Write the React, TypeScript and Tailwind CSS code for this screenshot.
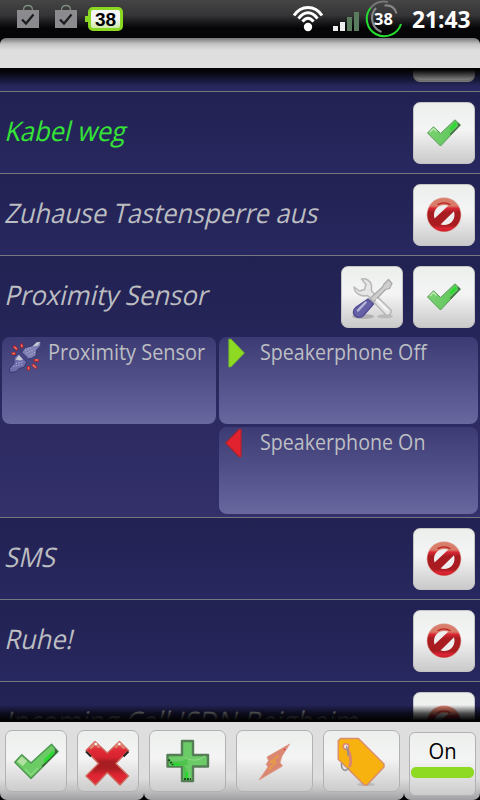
import type { ReactNode } from 'react';

const keyFace =
  'shrink-0 rounded-[7px] border border-[#c4c4c4] bg-linear-to-b from-[#ecefec] via-[#f4f4f5] via-45% to-[#cacaca]';
const barKey =
  'h-[62px] shrink-0 rounded-[7px] border border-[#b2b2b5] bg-linear-to-b from-[#ecefec] via-[#f4f4f5] via-45% to-[#cccccc]';

function CheckIcon() {
  return (
    <svg viewBox="0 0 62 62" className="-m-px block size-[62px]">
      <defs>
        <linearGradient id="chk" x1="0" y1="0" x2="1" y2="0.3">
          <stop offset="0" stopColor="#7fd375" />
          <stop offset="0.6" stopColor="#6bcb65" />
          <stop offset="1" stopColor="#55c352" />
        </linearGradient>
      </defs>
      <path d="M14.5 31 20.5 24.8 27.6 31.5 42 17.8 47.5 23 27.5 44Z" fill="url(#chk)" stroke="#5a9a5a" strokeWidth="1" strokeLinejoin="round" />
      <path d="M44.5 20.5 47.5 23 38 33 36.8 32 45 24Z" fill="#4a6b4c" />
      <path d="M37 26 42.5 20.5 43.5 23 38 28.5Z" fill="#22e02a" />
      <path d="M17 30 20.5 26.5 23.5 29.500" fill="none" stroke="#c3e9b4" strokeWidth="1.4" />
    </svg>
  );
}

function BigCheckIcon() {
  return (
    <svg viewBox="0 0 62 62" className="-m-px block size-[62px]">
      <path d="M9.8 32.3 16.8 24.8 26 33 46.5 14.3 53 21.5 26 48.5Z" fill="#6bcb65" stroke="#4d9650" strokeWidth="1.4" strokeLinejoin="round" />
      <path d="M49.5 18.5 53 21.5 38 37 36.5 36 50 22Z" fill="#40633f" />
      <path d="M39 29.5 48 20.5 49.5 23.5 39.5 33.5Z" fill="#27dc2e" />
      <path d="M12 31.5 16.8 26.5 22 31 18 36Z" fill="#b4dfa2" />
      <path d="M20 39 26 45 33 38" fill="none" stroke="#8fdb84" strokeWidth="1.2" />
    </svg>
  );
}

function BlockedIcon() {
  return (
    <svg viewBox="0 0 62 62" className="-m-px block size-[62px]">
      <defs>
        <linearGradient id="ban" x1="0" y1="13" x2="0" y2="49" gradientUnits="userSpaceOnUse">
          <stop offset="0" stopColor="#d9806c" />
          <stop offset="0.25" stopColor="#d87a68" />
          <stop offset="0.31" stopColor="#dc2735" />
          <stop offset="0.42" stopColor="#a91d22" />
          <stop offset="0.78" stopColor="#a81c20" />
          <stop offset="0.88" stopColor="#e02536" />
          <stop offset="1" stopColor="#b52020" />
        </linearGradient>
      </defs>
      <circle cx="31" cy="30.8" r="17.3" fill="#d99a8c" />
      <circle cx="31" cy="30.8" r="16.600" fill="url(#ban)" />
      <path d="M21.500 34.500C19 25.500 26 18.800 35.500 21.500ZM27.500 40.500 41 27.200C43.500 36 36.500 42.700 27.500 40.500Z" fill="#eeeeef" />
      <path d="M24.500 20.800Q31 16.800 37.500 20.800" fill="none" stroke="#b92222" strokeWidth="1.200" />
    </svg>
  );
}

function ToolsIcon() {
  return (
    <svg viewBox="0 0 62 62" className="-m-px block size-[62px]">
      <ellipse cx="22" cy="50.500" rx="11" ry="2.500" fill="#b0b0b0" />
      <ellipse cx="44" cy="50.300" rx="8" ry="2" fill="#b9b9b9" />
      <path d="M20.500 13C25 12 29.500 14.500 30.500 19.500L30.500 25 49.500 43.500C51.500 46.500 48.500 50.500 45 49L26.500 29.500C20 31 13.500 27.500 13 21L18.500 25 23.500 23.500 25 18.500Z" fill="#e6e6e6" stroke="#b8b8b8" strokeWidth="1.500" strokeLinejoin="round" />
      <path d="M43 18 47.500 13.500 51 17.500 48.500 22.500 44.500 23.500 32.500 36 29 32.500 41.500 21Z" fill="#cecece" stroke="#a8a8a8" strokeWidth="1.200" strokeLinejoin="round" />
      <path d="M27 33 32.500 38 22 50C18 53 12 50.500 12.500 45.500 12.500 43 14 42.500 16 40.500Z" fill="#6661a6" stroke="#504c91" strokeWidth="1.400" strokeLinejoin="round" />
      <path d="M17 44.500 24.500 36.500" stroke="#b9b6da" strokeWidth="2.400" strokeLinecap="round" />
      <path d="M35 33 46.500 44.500" stroke="#fafafa" strokeWidth="1.600" />
    </svg>
  );
}

function CrossIcon() {
  return (
    <svg viewBox="0 0 62 62" className="-m-px block size-[62px]">
      <defs>
        <linearGradient id="cross" x1="0" y1="11" x2="0" y2="56" gradientUnits="userSpaceOnUse">
          <stop offset="0" stopColor="#df6a5c" />
          <stop offset="0.2" stopColor="#e02a36" />
          <stop offset="0.36" stopColor="#d82430" />
          <stop offset="0.46" stopColor="#a71d22" />
          <stop offset="0.62" stopColor="#ab1e22" />
          <stop offset="0.76" stopColor="#de2432" />
          <stop offset="1" stopColor="#e0303a" />
        </linearGradient>
      </defs>
      <path d="M18 11.500 30.300 23 42.500 11.500 51.500 20.500 38.800 33.500 51.500 46 43 55 30.300 42.500 18.500 55 9 46 21.500 33.500 9 20.500Z" fill="url(#cross)" stroke="#cf695d" strokeWidth="1.400" strokeLinejoin="round" />
      <path d="M13 18.500 18.300 13.500 22.500 17.500M38 17.500 42.500 13.500 47.500 18.500" fill="none" stroke="#df8370" strokeWidth="2.600" />
      <path d="M9 21.500 14 26.500M51.500 21.500 46.500 26.500" stroke="#262020" strokeWidth="1.800" />
      <circle cx="18.800" cy="14" r="1.300" fill="#fff" />
      <circle cx="42.300" cy="14" r="1.300" fill="#fff" />
    </svg>
  );
}

function PlusIcon() {
  return (
    <svg viewBox="0 0 77 62" className="-m-px block h-[62px] w-[77px]">
      <path d="M33 11H44V25H59V36.500H44V51H33V36.500H18.500V25H33Z" fill="#6acb67" stroke="#557d56" strokeWidth="2.400" strokeLinejoin="round" />
      <path d="M20 31.500H28Q35 32 38.500 27V35H35L37.500 39V49H34.500V36H20Z" fill="#4fc44d" />
      <path d="M24 34.500H31M38 42V49.500" stroke="#22dc2c" strokeWidth="2" />
      <path d="M19.500 29.500 24 35M35 49H42" stroke="#174a19" strokeWidth="2" strokeDasharray="2 1" />
      <path d="M36 28Q47 33 56 26" fill="none" stroke="#8ad680" strokeWidth="1.200" />
    </svg>
  );
}

function BoltIcon() {
  return (
    <svg viewBox="0 0 77 62" className="-m-px block h-[62px] w-[77px]">
      <path d="M53.700 14 31 27 32.500 30.500 30.300 34.500 32 37 23 50 46.500 36 44 32.500 46 26Z" fill="#da8671" stroke="#dc9a88" strokeWidth="0.900" strokeLinejoin="round" />
      <path d="M42 26 36 31.500 40 32 32.500 40" fill="none" stroke="#eda23a" strokeWidth="2.500" strokeDasharray="1.500 1" />
      <circle cx="48.500" cy="19.500" r="0.800" fill="#e22838" />
    </svg>
  );
}

function TagIcon() {
  return (
    <svg viewBox="0 0 77 62" className="-m-px block h-[62px] w-[77px]">
      <ellipse cx="43" cy="54.500" rx="9" ry="1.600" fill="#b9b9b9" />
      <path d="M15.200 10.700 17.500 8.500H35.500L61 34V37L44 55H41.300L15.200 29.200Z" fill="#f7b20f" stroke="#d98d70" strokeWidth="1.400" strokeLinejoin="round" />
      <circle cx="23" cy="16.500" r="2.800" fill="#f1eee8" stroke="#d98770" strokeWidth="1.600" />
      <path d="M24.500 19C27.500 25 28.500 32 26.500 37" fill="none" stroke="#d98770" strokeWidth="3" />
      <path d="M23.300 16Q25.500 20 25 26M18.500 33Q18 40 22.500 40.500L26 38" fill="none" stroke="#8d8f98" strokeWidth="1.500" />
    </svg>
  );
}

function PlugIcon() {
  return (
    <svg viewBox="0 0 36 37" className="block h-[37px] w-9 shrink-0">
      <path d="M1.500 31.500 2 35.500 8 34.700 11.300 31.500 16 30.300 18.700 25 10.300 16.800 6 20.700V26.300Z" fill="#6f6dab" stroke="#3a3870" strokeWidth="1" strokeLinejoin="round" />
      <path d="M13.700 15.300 17 10.700 24.300 8.700 28.500 4.700 33 4 32.700 8.700 28.700 13 28 18.700 23.700 21.300 20.500 22Z" fill="#807fb5" stroke="#3a3870" strokeWidth="1" strokeLinejoin="round" />
      <path d="M11 15.500 20.500 24.500" stroke="#4a4788" strokeWidth="1.800" />
      <path d="M7.500 22.500 11 18 15 22.500 12 23.500ZM24.500 9.500 29 5.300 32 5 30 8.500Z" fill="#c9cad2" />
      <path d="M17 13.500 23 11M18.500 16 26.500 12.500M21 18.500 27 15.500M8 26.500 15 25M5 29.500 14 27.500" stroke="#a9aaca" strokeWidth="1.200" strokeDasharray="1.200 1.500" />
      <path d="M13.500 6.500 14 11M5.500 9 9.500 13M3.500 16.700H7.800M25.700 23.300H31M24.200 27.300 28.500 31.300M20.500 29V33.500" stroke="#b91f25" strokeWidth="2.800" />
      <path d="M13.500 7.500 13.900 10M6.200 9.700 8.800 12.300M4.300 16.500H7M27 23H30.300M24.800 27.900 28 30.800M20.500 30V32.500" stroke="#e9796a" strokeWidth="1.500" />
    </svg>
  );
}

function BagIcon() {
  return (
    <svg viewBox="0 0 22 24" className="block h-6 w-[22px]">
      <path d="M6.500 6Q6.500 1.500 11 1.500T15.500 6" fill="none" stroke="#7c8d80" strokeWidth="1.300" />
      <path d="M0 6H22V24H0Z" fill="#8b8b8f" />
      <path d="M5 15.500 9 19.500 16.500 10.500" fill="none" stroke="#1a1d1c" strokeWidth="2.200" />
    </svg>
  );
}

function StatusBar() {
  return (
    <header className="flex h-[38px] shrink-0 items-start bg-linear-to-b from-[#454545] via-[#353537] via-40% to-[#050507] to-75% text-white">
      <div className="flex pt-1 pl-[17px]">
        <BagIcon />
        <div className="w-4" />
        <BagIcon />
      </div>
      <div className="mt-4 ml-2 h-[6px] w-[3px] bg-[#8bd822]" />
      <div className="mt-[7px] flex h-6 w-[35px] items-center justify-center rounded-[5px] border-[3px] border-[#8bd822] bg-linear-to-b from-[#f5f5f5] from-50% to-[#cfeaa8] font-['Liberation_Sans',sans-serif] text-[19px] leading-none font-bold text-black">
        38
      </div>
      <svg viewBox="0 0 120 38" className="ml-[169px] block h-[38px] w-[120px]">
        <g fill="none" stroke="#fff" strokeWidth="3">
          <path d="M2 15.500C9 4.800 23 4.800 30 15.500M6.500 18.700C12 10.800 20 10.800 25.500 18.700M10.500 21.700C14 17 18 17 21.500 21.700" />
        </g>
        <circle cx="16" cy="27" r="4.200" fill="#fff" />
        <path d="M41 26H46V31H41ZM48 22H53V31H48Z" fill="#ededed" />
        <path d="M55 17H60V31H55ZM62 12H67V31H62Z" fill="#5a7b5d" />
        <path d="M96 2A17.500 17.500 0 0 0 78.500 8" fill="none" stroke="#777779" strokeWidth="2" />
        <path d="M78.500 8A17.500 17.500 0 1 0 109 24" fill="none" stroke="#25dd2e" strokeWidth="2" />
        <path d="M92.500 5.500Q102 4.500 104.500 13.500M84 8A15 15 0 0 0 89.500 32" fill="none" stroke="#868688" strokeWidth="2.200" />
        <text x="91.500" y="25" textAnchor="middle" fill="#fff" fontSize="16.500" fontWeight="700" fontFamily="Open Sans, sans-serif">38</text>
      </svg>
      <span className="mt-[5px] origin-left scale-x-[0.95] font-['Open_Sans',sans-serif] text-[24px] leading-[28px] font-bold whitespace-nowrap">
        21:43
      </span>
    </header>
  );
}

const label =
  "block flex-1 origin-bottom-left -skew-x-[14deg] font-['Open_Sans','Noto_Sans',sans-serif] text-[27px] leading-9 whitespace-nowrap";

function Row({ children, icon, extra }: { children: ReactNode; icon: ReactNode; extra?: ReactNode }) {
  return (
    <div className="flex h-[81px] shrink-0 items-start gap-[10px] pt-[10px] pr-[5px] pl-[2px]">
      <div className="flex h-[58px] min-w-0 flex-1 items-center">{children}</div>
      {extra && <div className={`size-[62px] ${keyFace}`}>{extra}</div>}
      <div className={`size-[62px] ${keyFace}`}>{icon}</div>
    </div>
  );
}

const section = 'shrink-0 border-b border-[#77777f] bg-linear-to-b from-[#212152] to-[#282860]';
const card = 'flex h-[87px] items-start rounded-[8px] bg-linear-to-b from-[#3c3b73] via-[#525089] via-50% to-[#68679e]';
const cardText =
  "block origin-left font-['Open_Sans','Noto_Sans',sans-serif] text-[21px] leading-[30px] whitespace-nowrap text-[#bdbfc3]";

function ProfileList() {
  return (
    <main className="relative flex h-[654px] shrink-0 flex-col overflow-hidden bg-[#252558]">
      <div className={`flex h-6 flex-col items-end justify-end pr-[5px] pb-[9px] ${section}`}>
        <div className="h-[14px] w-[62px] rounded-b-[7px] border-b-2 border-[#a5a5a5] bg-[#cacaca]" />
      </div>
      <div className={section}>
        <Row icon={<CheckIcon />}>
          <span className={`${label} scale-x-[0.945] text-[#35e435]`}>Kabel weg</span>
        </Row>
      </div>
      <div className={section}>
        <Row icon={<BlockedIcon />}>
          <span className={`${label} scale-x-[0.942] text-[#bbbdc0]`}>Zuhause Tastensperre aus</span>
        </Row>
      </div>
      <div className="flex h-[262px] shrink-0 flex-col border-b border-[#77777f] bg-linear-to-b from-[#212152] to-[#33306a]">
        <Row icon={<CheckIcon />} extra={<ToolsIcon />}>
          <span className={`${label} scale-x-[0.953] text-[#bbbdc0]`}>Proximity Sensor</span>
        </Row>
        <div className="grid grid-cols-[214px_259px] gap-[3px] pl-[2px]">
          <div className={card}>
            <div className="pl-[6px]"><PlugIcon /></div>
            <span className={`${cardText} ml-1 scale-x-[0.948]`}>Proximity Sensor</span>
          </div>
          <div className={card}>
            <svg viewBox="0 0 41 32" className="block h-8 w-[41px] shrink-0">
              <path d="M9.700 2H12L25.500 16 12 30H9.700Z" fill="#8ed922" stroke="#62a03c" strokeWidth="0.800" />
            </svg>
            <span className={`${cardText} scale-x-[0.935]`}>Speakerphone Off</span>
          </div>
          <div className={`${card} col-start-2`}>
            <svg viewBox="0 0 41 32" className="block h-8 w-[41px] shrink-0">
              <path d="M22.300 2H20.500L6.700 16 20.500 30H22.300Z" fill="#e3222f" />
              <path d="M22 2.500V29.500M20.500 2 6.700 16 20.500 30" fill="none" stroke="#a92330" strokeWidth="1.200" />
            </svg>
            <span className={`${cardText} scale-x-[0.935]`}>Speakerphone On</span>
          </div>
        </div>
      </div>
      <div className={section}>
        <Row icon={<BlockedIcon />}>
          <span className={`${label} scale-x-[0.945] text-[#bbbdc0]`}>SMS</span>
        </Row>
      </div>
      <div className={section}>
        <Row icon={<BlockedIcon />}>
          <span className={`${label} scale-x-[0.945] text-[#bbbdc0]`}>Ruhe!</span>
        </Row>
      </div>
      <div className={section}>
        <Row icon={<BlockedIcon />}>
          <span className={`${label} scale-x-[0.974] text-[#bbbdc0]`}>Incoming Call ISDN Beigheim</span>
        </Row>
      </div>
      <div className="absolute inset-x-0 top-0 h-[18px] bg-linear-to-b from-[#020203] from-10% to-transparent" />
      <div className="absolute inset-x-0 bottom-0 h-[17px] bg-linear-to-t from-[#020203] from-10% via-[#020203]/70 via-50% to-transparent" />
    </main>
  );
}

const panel = 'flex h-[78px] shrink-0 rounded-b-[7px] bg-linear-to-b from-[#dedede] from-72% via-[#c4c4c4] via-86% to-[#a0a0a4]';

function Toolbar() {
  return (
    <footer className="flex h-[78px] shrink-0 bg-black">
      <div className={`${panel} w-36 gap-[10px] pt-2 pl-[5px]`}>
        <div className={`w-[62px] ${barKey}`}><BigCheckIcon /></div>
        <div className={`w-[62px] ${barKey}`}><CrossIcon /></div>
      </div>
      <div className={`${panel} w-[260px] gap-[10px] pt-2 pl-[5px]`}>
        <div className={`w-[77px] ${barKey}`}><PlusIcon /></div>
        <div className={`w-[77px] ${barKey}`}><BoltIcon /></div>
        <div className={`w-[77px] ${barKey}`}><TagIcon /></div>
      </div>
      <div className={`${panel} w-[76px] pt-[10px] pl-[5px]`}>
        <div className="flex h-[64px] w-[67px] flex-col items-center rounded-[6px] border border-[#b2b2b5] bg-linear-to-b from-[#ecefec] via-[#f4f4f5] via-45% to-[#cccccc] pt-1">
          <span className="scale-x-[0.96] font-['Open_Sans','Noto_Sans',sans-serif] text-[21px] leading-[29px] text-black">On</span>
          <div className="mt-px h-[11px] w-[63px] rounded-[5px] bg-[#8ed922]" />
        </div>
      </div>
    </footer>
  );
}

export default function App() {
  return (
    <div className="flex h-[800px] w-[480px] flex-col overflow-hidden bg-black">
      <StatusBar />
      <div className="h-[30px] shrink-0 rounded-t-[6px] bg-linear-to-b from-[#77777b] via-[#c4c4c4] via-20% to-[#dedede] to-40%" />
      <ProfileList />
      <Toolbar />
    </div>
  );
}
